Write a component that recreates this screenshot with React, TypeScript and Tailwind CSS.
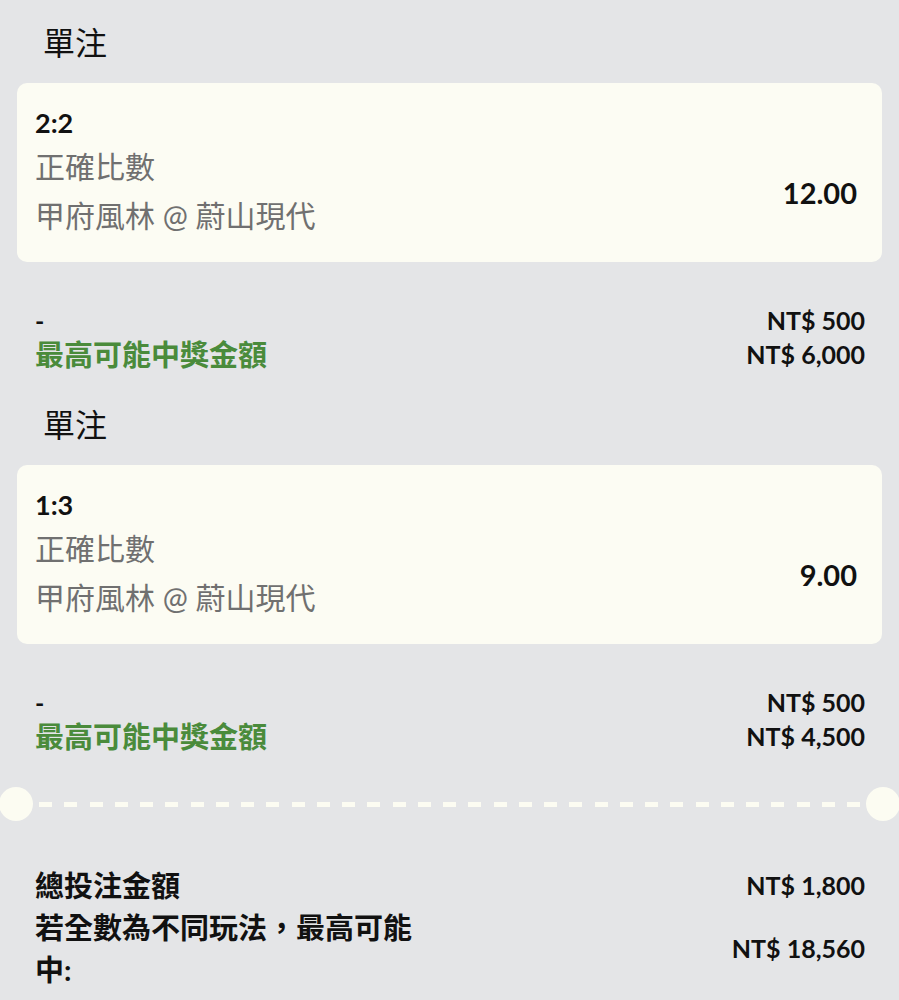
import React from 'react'

const bets = [
  { score: '2:2', market: '正確比數', match: '甲府風林 @ 蔚山現代', odds: '12.00', stake: 'NT$ 500', win: 'NT$ 6,000' },
  { score: '1:3', market: '正確比數', match: '甲府風林 @ 蔚山現代', odds: '9.00', stake: 'NT$ 500', win: 'NT$ 4,500' },
]

function BetSection({ bet }: { bet: (typeof bets)[number] }) {
  return (
    <div className="pb-[33px]">
      <div className="pl-[43px] h-[40px] leading-[40px] text-[32px] text-[#111]">單注</div>
      <div className="mx-[17px] mt-[20px] h-[179px] rounded-[10px] bg-[#fcfcf3] pl-[18px] pr-[25px] pt-[20px]">
        <div className="h-[40px] leading-[40px] text-[27px] font-bold text-[#111]">{bet.score}</div>
        <div className="flex items-center justify-between">
          <div className="text-[30px] text-[#707070]">
            <div className="h-[46px] leading-[46px]">{bet.market}</div>
            <div className="mt-[3px] h-[46px] leading-[46px]">{bet.match}</div>
          </div>
          <div className="pt-[4px] text-[29px] font-bold text-[#111]">{bet.odds}</div>
        </div>
      </div>
      <div className="mt-[42px] pl-[35px] pr-[34px]">
        <div className="flex h-[34px] items-center justify-between">
          <span className="text-[25px] font-bold text-[#111]">-</span>
          <span className="text-[25px] font-bold text-[#111]">{bet.stake}</span>
        </div>
        <div className="flex h-[34px] items-center justify-between">
          <span className="text-[29px] font-bold text-[#4a8b3b]">最高可能中獎金額</span>
          <span className="text-[25px] font-bold text-[#111]">{bet.win}</span>
        </div>
      </div>
    </div>
  )
}

export default function App() {
  return (
    <div
      className="min-h-[1000px] w-full overflow-hidden bg-[#e4e5e7] pt-[23px]"
      style={{ fontFamily: '"Lato", "Noto Sans CJK TC", sans-serif' }}
    >
      {bets.map((b, i) => (
        <BetSection key={i} bet={b} />
      ))}

      <div className="flex items-center justify-between">
        <div className="h-[34px] w-[34px] -ml-[1px] rounded-full bg-[#fcfcf2]" />
        <div className="flex flex-1 justify-between px-[6px]">
          {Array.from({ length: 33 }).map((_, i) => (
            <div key={i} className="h-[5px] w-[13px] bg-[#fcfcf2]" />
          ))}
        </div>
        <div className="h-[34px] w-[34px] -mr-[1px] rounded-full bg-[#fcfcf2]" />
      </div>

      <div className="mt-[44px] pl-[35px] pr-[34px] text-[#111]">
        <div className="flex h-[42px] items-center justify-between">
          <span className="text-[29px] font-bold">總投注金額</span>
          <span className="text-[25px] font-bold">NT$ 1,800</span>
        </div>
        <div className="flex items-center justify-between">
          <div className="w-[392px] text-[29px] font-bold leading-[42px]">若全數為不同玩法，最高可能中:</div>
          <span className="text-[25px] font-bold">NT$ 18,560</span>
        </div>
      </div>
    </div>
  )
}
